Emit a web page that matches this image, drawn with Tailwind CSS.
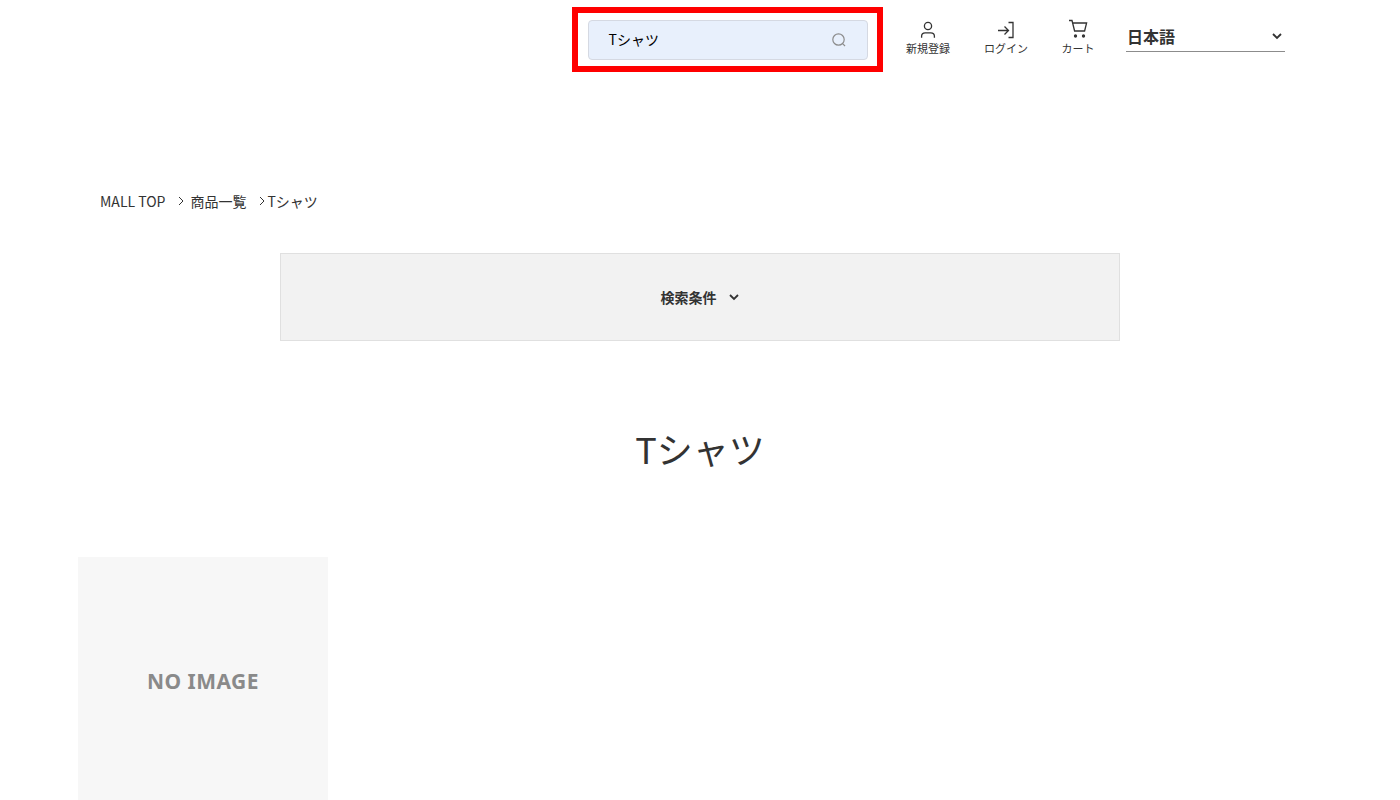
<!DOCTYPE html>
<html lang="ja">

<head>
  <meta charset="UTF-8" />
  <title>Tシャツ</title>
  <script src="https://cdn.jsdelivr.net/npm/@tailwindcss/browser@4"></script>
</head>

<body class="bg-white text-[#333] font-['Noto_Sans_CJK_JP','Noto_Sans',sans-serif] overflow-hidden h-[800px]">
  <!-- Header -->
  <header class="h-[72px] pt-[7px] flex items-start">
    <div class="ml-[572px] w-[311px] h-[65px] border-[6px] border-[#ff0000] flex items-center justify-center">
      <div class="w-[280px] h-[40px] bg-[#e8f0fc] border border-[#d5d9e2] rounded-[4px] flex items-center justify-between pl-[20px] pr-[20px]">
        <span class="text-[14px] text-black">Tシャツ</span>
        <svg class="w-[16px] h-[16px] text-[#8c8c8c]" viewBox="0 0 16 16" fill="none" stroke="currentColor" stroke-width="1.2">
          <circle cx="7.5" cy="7.5" r="5.7" />
          <path d="M11.6 11.6l2.4 2.4" />
        </svg>
      </div>
    </div>

    <nav class="flex items-start ml-[21px] pt-[14px]">
      <a class="w-[48px] flex flex-col items-center">
        <svg class="w-[18px] h-[18px] text-[#333]" viewBox="0 0 18 18" fill="none" stroke="currentColor" stroke-width="1.3">
          <circle cx="9" cy="5" r="3.6" />
          <path d="M2.6 16.8v-1.6c0-2 1.6-3.4 3.6-3.4h5.6c2 0 3.6 1.4 3.6 3.4v1.6" />
        </svg>
        <span class="text-[11px] leading-[16px] mt-[1px] whitespace-nowrap">新規登録</span>
      </a>
      <a class="w-[48px] ml-[30px] flex flex-col items-center">
        <svg class="w-[18px] h-[18px] text-[#333]" viewBox="0 0 18 18" fill="none" stroke="currentColor" stroke-width="1.3">
          <path d="M1 9.5h10M7.5 5.5l4 4-4 4" />
          <path d="M11.5 1.5h4.5v15h-4.5" />
        </svg>
        <span class="text-[11px] leading-[16px] mt-[1px] whitespace-nowrap">ログイン</span>
      </a>
      <a class="w-[36px] ml-[30px] flex flex-col items-center">
        <svg class="w-[20px] h-[20px] text-[#333] -mt-[2px]" viewBox="0 0 20 20" fill="none" stroke="currentColor" stroke-width="1.3">
          <path d="M1 1.5h3l2.6 10.5h10l2-8H4.8" />
          <circle cx="7.5" cy="17" r="1" fill="currentColor" />
          <circle cx="15.5" cy="17" r="1" fill="currentColor" />
        </svg>
        <span class="text-[11px] leading-[16px] mt-[1px] whitespace-nowrap">カート</span>
      </a>
      <div class="w-[159px] h-[31px] ml-[30px] border-b border-[#8c8c8c] flex items-center justify-between pl-[1px] pr-[2px]">
        <span class="text-[16px] font-bold">日本語</span>
        <svg class="w-[12px] h-[12px]" viewBox="0 0 12 12" fill="none" stroke="currentColor" stroke-width="1.8">
          <path d="M2 4l4 4 4-4" />
        </svg>
      </div>
    </nav>
  </header>

  <!-- Breadcrumb -->
  <div class="flex items-center ml-[100px] mt-[119px] h-[20px] text-[14px] text-[#333]">
    <span>MALL TOP</span>
    <svg class="w-[8px] h-[10px] ml-[12px] mr-[5px]" viewBox="0 0 8 10" fill="none" stroke="currentColor" stroke-width="1"><path d="M2 1l4 4-4 4" /></svg>
    <span>商品一覧</span>
    <svg class="w-[8px] h-[10px] ml-[12px] mr-[1px]" viewBox="0 0 8 10" fill="none" stroke="currentColor" stroke-width="1"><path d="M2 1l4 4-4 4" /></svg>
    <span>Tシャツ</span>
  </div>

  <!-- Search conditions -->
  <div class="w-[840px] h-[88px] mx-auto mt-[42px] bg-[#f2f2f2] border border-[#e0e0e0] flex items-center justify-center gap-[11px]">
    <span class="text-[14px] font-bold">検索条件</span>
    <svg class="w-[12px] h-[12px]" viewBox="0 0 12 12" fill="none" stroke="currentColor" stroke-width="1.8">
      <path d="M2 4l4 4 4-4" />
    </svg>
  </div>

  <h1 class="mt-[84px] text-center text-[36px] leading-[46px] font-normal text-[#333]">Tシャツ</h1>

  <!-- Item -->
  <div class="ml-[78px] mt-[86px] w-[250px] h-[250px] bg-[#f7f7f7] flex items-center justify-center">
    <span class="text-[21px] font-bold tracking-[0.5px] text-[#8a8a8a] font-['Noto_Sans',sans-serif]">NO IMAGE</span>
  </div>
</body>
</html>
